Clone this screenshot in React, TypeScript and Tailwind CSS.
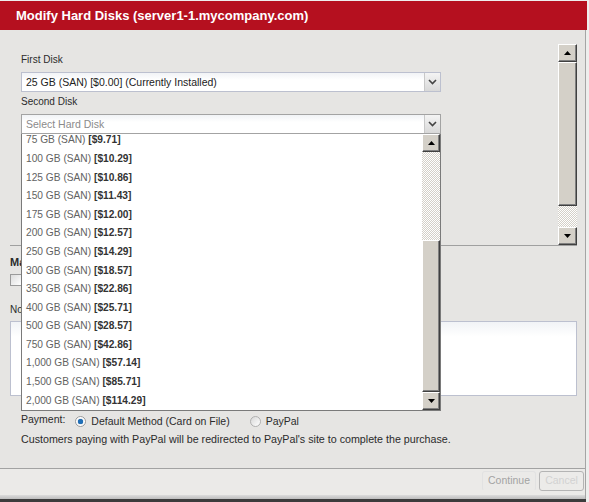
import React from 'react';

const disks = [
  ['75 GB (SAN)', '$9.71'],
  ['100 GB (SAN)', '$10.29'],
  ['125 GB (SAN)', '$10.86'],
  ['150 GB (SAN)', '$11.43'],
  ['175 GB (SAN)', '$12.00'],
  ['200 GB (SAN)', '$12.57'],
  ['250 GB (SAN)', '$14.29'],
  ['300 GB (SAN)', '$18.57'],
  ['350 GB (SAN)', '$22.86'],
  ['400 GB (SAN)', '$25.71'],
  ['500 GB (SAN)', '$28.57'],
  ['750 GB (SAN)', '$42.86'],
  ['1,000 GB (SAN)', '$57.14'],
  ['1,500 GB (SAN)', '$85.71'],
  ['2,000 GB (SAN)', '$114.29'],
];

const Chevron = () => (
  <svg width="9" height="6" viewBox="0 0 9 6">
    <polyline points="1,1 4.5,4.5 8,1" fill="none" stroke="#444" strokeWidth="1.6" />
  </svg>
);

const Arrow = ({ down }: { down?: boolean }) => (
  <svg width="7" height="4" viewBox="0 0 7 4">
    <polygon points={down ? '0,0 7,0 3.5,4' : '0,4 7,4 3.5,0'} fill="#000" />
  </svg>
);

const SbButton = ({ down }: { down?: boolean }) => (
  <div className="h-[18px] shrink-0 flex items-center justify-center bg-[#d4d0c8] border-t border-l border-t-white border-l-white border-b border-r border-b-[#404040] border-r-[#404040] shadow-[inset_-1px_-1px_#808080]">
    <Arrow down={down} />
  </div>
);

const Thumb = ({ h }: { h: string }) => (
  <div className={`${h} shrink-0 bg-[#d4d0c8] border-t border-l border-t-white border-l-white border-b border-r border-b-[#404040] border-r-[#404040] shadow-[inset_-1px_-1px_#808080]`} />
);

const Track = ({ h }: { h: string }) => (
  <div className={`${h} shrink-0 bg-[repeating-conic-gradient(#d4d0c8_0_25%,#ffffff_0_50%)] bg-[length:2px_2px]`} />
);

const Select = ({ text, placeholder, focused }: { text: string; placeholder?: boolean; focused?: boolean }) => (
  <div className={`w-[420px] h-[20px] flex border ${focused ? 'border-[#a3a3a3]' : 'border-[#bcc0cf]'} bg-gradient-to-b from-[#f1f3f6] to-white to-40%`}>
    <div className={`flex-1 pl-[4px] leading-[18px] text-[10.5px] ${placeholder ? 'text-[#8a8a8a]' : 'text-[#222]'}`}>{text}</div>
    <div className="w-[16px] flex items-center justify-center border-l border-[#c8c8c8] bg-gradient-to-b from-[#f4f4f4] to-[#d9d9d9]">
      <Chevron />
    </div>
  </div>
);

export default function App() {
  return (
    <div className="relative w-[589px] h-[502px] bg-[#eeeeed] pt-px font-['Liberation_Sans',Arial,sans-serif] text-[#2b2b2b] overflow-hidden">
      <div className="w-[587px] h-[29px] bg-[#b5101f] pl-[16px] pt-[6px] text-white font-bold text-[13px] leading-[17px]">
        Modify Hard Disks (server1-1.mycompany.com)
      </div>

      <div className="w-[586px] h-[469px] flex flex-col border-r border-[#a5a5a5]">
        <div className="flex-1 bg-[#e6e5e3] pt-[14px] pl-[10px] pr-[8px] flex flex-col">
          <div className="h-[202px] flex border-b border-[#a0a0a0]">
            <div className="flex-1 pl-[11px] pt-[10px]">
              <div className="text-[10px] leading-[12px]">First Disk</div>
              <div className="mt-[6px]">
                <Select text="25 GB (SAN) [$0.00] (Currently Installed)" />
              </div>
              <div className="mt-[4px] text-[10px] leading-[12px]">Second Disk</div>
              <div className="mt-[6px]">
                <Select text="Select Hard Disk" placeholder focused />
              </div>
            </div>
            <div className="w-[19px] flex flex-col">
              <SbButton />
              <Thumb h="h-[144px]" />
              <Track h="h-[21px]" />
              <SbButton down />
            </div>
          </div>

          <div className="mt-[10px] text-[11px] leading-[12px] font-bold">Managed Backups</div>
          <div className="mt-[6px] w-[12px] h-[12px] border border-[#9a9a9a] bg-gradient-to-br from-[#dcdcdc] to-white" />
          <div className="mt-[18px] text-[10px] leading-[12px]">Notes</div>
          <div className="mt-[5px] h-[75px] border border-[#bcc0cf] bg-gradient-to-b from-[#f1f3f6] to-white to-20%" />

          <div className="mt-[17px] pl-[11px] flex items-center h-[12px] text-[10.5px] leading-[12px]">
            <span>Payment:</span>
            <span className="ml-[10px] mt-[4px] w-[11px] h-[11px] rounded-full border border-[#9a9a9a] bg-white flex items-center justify-center">
              <span className="w-[5px] h-[5px] rounded-full bg-[#1f6fb8] shadow-[0_0_1px_#0b3f73]" />
            </span>
            <span className="ml-[5px] mt-[3px]">Default Method (Card on File)</span>
            <span className="ml-[20px] mt-[4px] w-[11px] h-[11px] rounded-full border border-[#b0b0b0] bg-gradient-to-br from-[#d8d8d8] to-white" />
            <span className="ml-[5px] mt-[3px]">PayPal</span>
          </div>
          <div className="mt-[8px] pl-[11px] text-[10.7px] leading-[12px] whitespace-nowrap">
            Customers paying with PayPal will be redirected to PayPal's site to complete the purchase.
          </div>
        </div>

        <div className="h-[27px] border-t border-[#a2a2a2] bg-[#ebeae8] flex justify-end items-start pt-[2px] pr-px gap-[3px]">
          <div className="w-[54px] h-[20px] border border-[#e2e2e2] border-b-transparent rounded-[3px] flex items-center justify-center text-[10.5px] text-[#a3a3a3]">
            Continue
          </div>
          <div className="w-[45px] h-[20px] border border-[#b4b4b4] rounded-[3px] flex items-center justify-center text-[10.5px] text-[#d2d2d2] bg-[#ecebe9]">
            Cancel
          </div>
        </div>
        <div className="h-[4px] bg-gradient-to-b from-[#dcdcdc] to-[#bdbdbd]" />
      </div>
      <div className="h-[3px] w-[586px] bg-[#3c3c3c]" />

      <div className="absolute left-[21px] top-[134px] w-[420px] h-[277px] flex bg-white border border-t-0 border-[#7a7a7a]">
        <div className="flex-1 overflow-hidden">
          <div className="mt-[-3.3px]">
            {disks.map(([size, price]) => (
              <div key={size} className="h-[18.6px] pl-[4px] flex items-center text-[10.2px] whitespace-nowrap">
                <span className="text-[#626262]">{size}&nbsp;</span>
                <span className="font-bold text-[#333]">[{price}]</span>
              </div>
            ))}
          </div>
        </div>
        <div className="w-[18px] flex flex-col">
          <SbButton />
          <Track h="h-[88px]" />
          <Thumb h="h-[152px]" />
          <SbButton down />
        </div>
      </div>
    </div>
  );
}
